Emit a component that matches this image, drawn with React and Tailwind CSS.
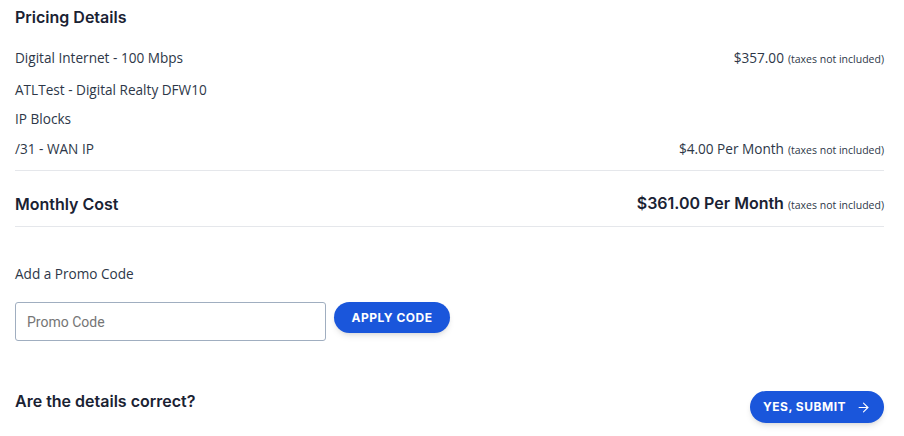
import { ArrowRight } from "lucide-react";

const head = { fontFamily: "Inter, 'Liberation Sans', sans-serif" };
const body = { fontFamily: "'Open Sans', 'Liberation Sans', sans-serif" };

function Taxes() {
  return <span className="ml-[4px] text-[10.5px] text-[#2d3748]">(taxes not included)</span>;
}

export default function App() {
  return (
    <div className="min-h-screen w-[904px] bg-white pl-[15px] pr-[20px] pt-[7px] text-[#2d3748]" style={body}>
      <h2 className="text-[16px] font-semibold leading-[20px] text-[#1a2233]" style={head}>
        Pricing Details
      </h2>

      <div className="mt-[20px] text-[13.6px]">
        <div className="flex h-[22px] items-center justify-between">
          <span>Digital Internet - 100 Mbps</span>
          <span>
            $357.00<Taxes />
          </span>
        </div>
        <div className="mt-[10px] flex h-[22px] items-center">ATLTest - Digital Realty DFW10</div>
        <div className="mt-[7px] flex h-[22px] items-center">IP Blocks</div>
        <div className="mt-[8px] flex h-[22px] items-center justify-between">
          <span>/31 - WAN IP</span>
          <span>
            $4.00 Per Month<Taxes />
          </span>
        </div>
      </div>

      <div className="mt-[10px] border-t border-[#e5e7eb]" />

      <div className="flex items-center justify-between pb-[11px] pt-[22px] leading-[20px] text-[#1a2233]">
        <span className="text-[16px] font-semibold" style={head}>Monthly Cost</span>
        <span>
          <span className="text-[16px] font-semibold" style={head}>$361.00 Per Month</span>
          <Taxes />
        </span>
      </div>

      <div className="border-t border-[#e5e7eb]" />

      <div className="mt-[37px] text-[13.6px]">Add a Promo Code</div>

      <div className="mt-[18px] flex items-start gap-[8px]">
        <input
          type="text"
          placeholder="Promo Code"
          className="h-[39px] w-[311px] rounded-[3px] border border-[#a0aec0] px-[11px] text-[14px] placeholder-[#757575] outline-none"
          style={{ fontFamily: "Roboto, 'Liberation Sans', sans-serif" }}
        />
        <button
          className="h-[31px] w-[116px] rounded-full bg-[#1a56db] text-[12px] font-bold tracking-[0.5px] text-white shadow-md"
          style={head}
        >
          APPLY CODE
        </button>
      </div>

      <div className="mt-[48px] flex items-center justify-between">
        <span className="mb-[12px] text-[16px] font-semibold text-[#1a2233]" style={head}>
          Are the details correct?
        </span>
        <button
          className="flex h-[32px] w-[134px] items-center justify-center gap-[10px] rounded-full bg-[#1a56db] text-[12px] font-bold tracking-[0.5px] text-white shadow-md"
          style={head}
        >
          YES, SUBMIT
          <ArrowRight size={15} strokeWidth={1.75} />
        </button>
      </div>
    </div>
  );
}
